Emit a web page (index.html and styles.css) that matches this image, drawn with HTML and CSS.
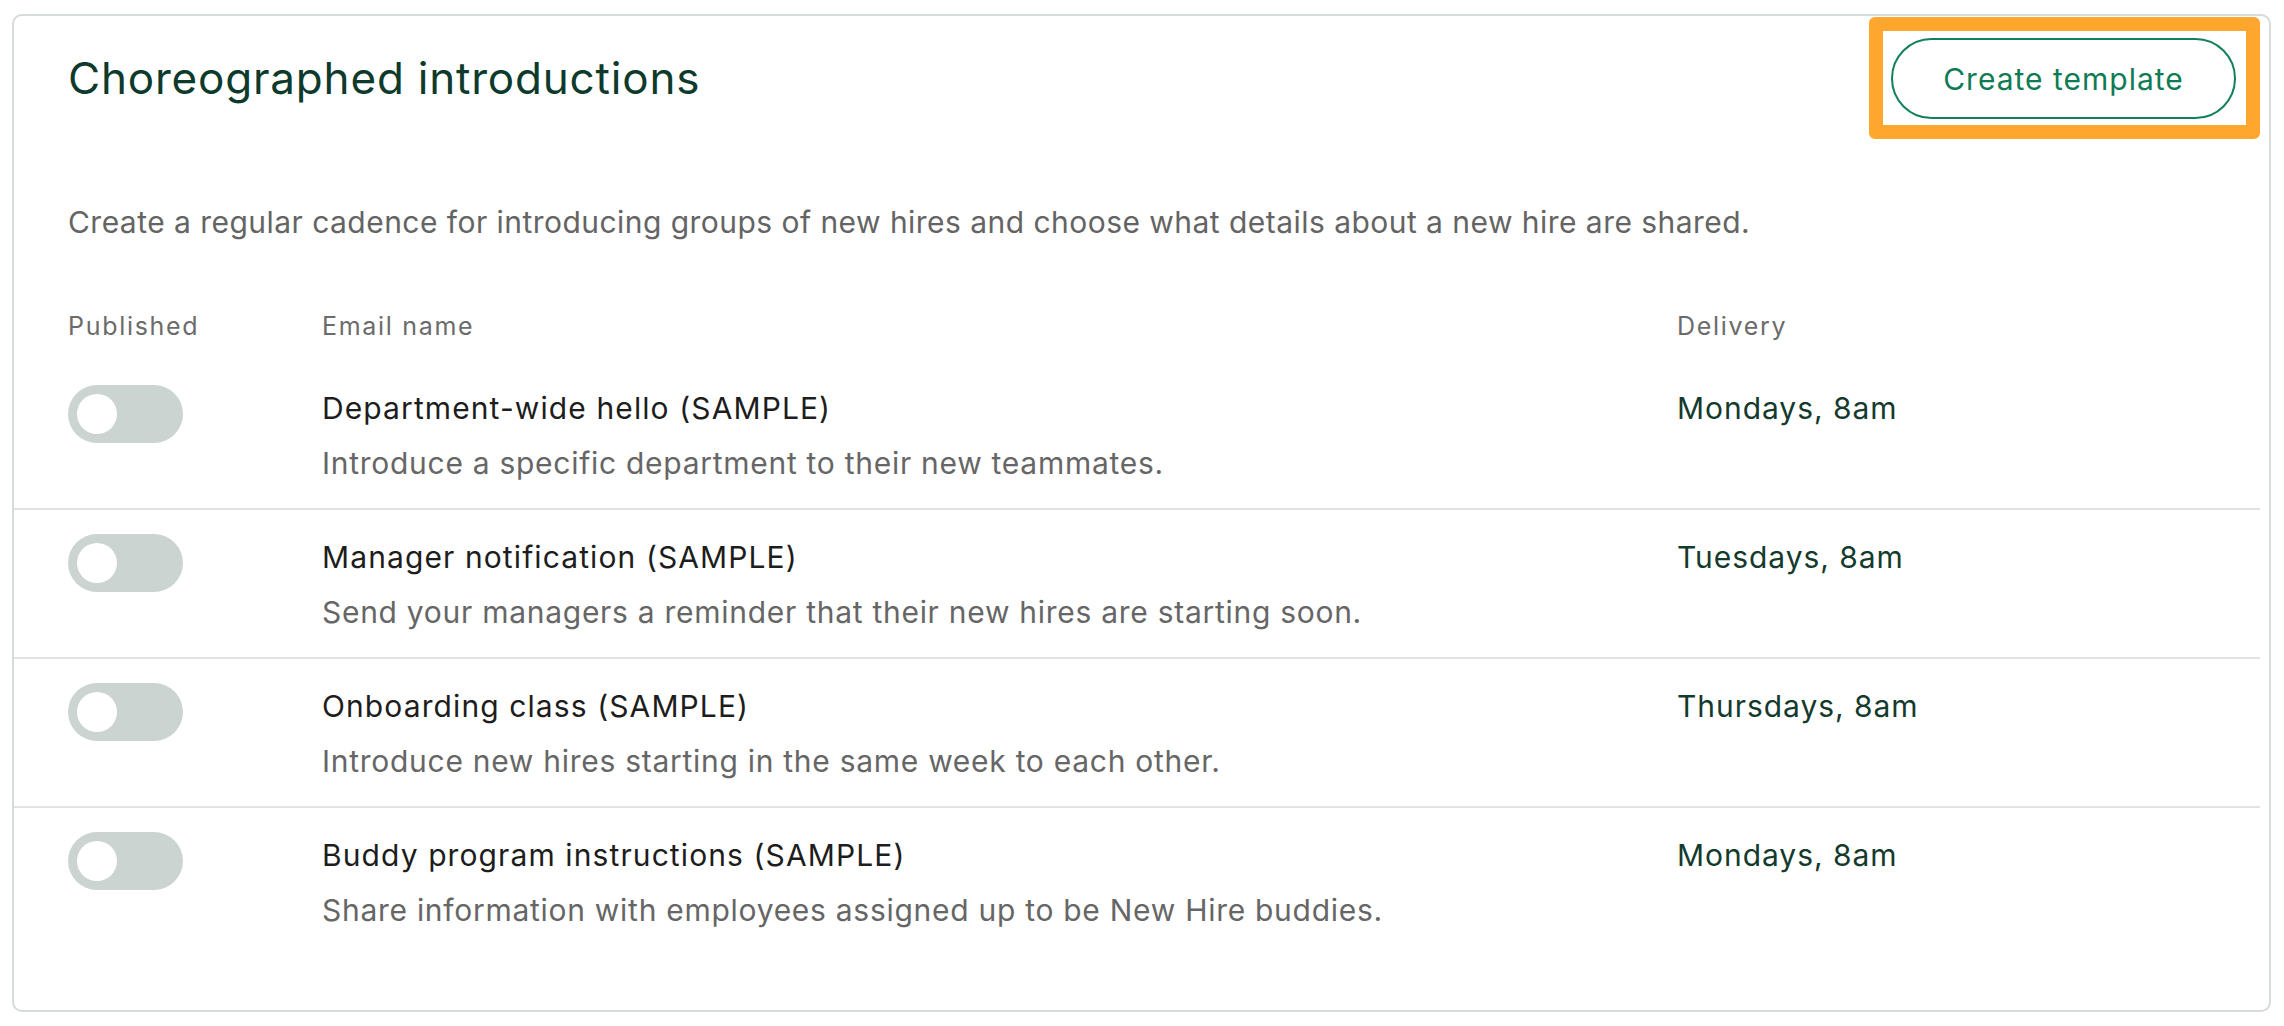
FILE: index.html
```html
<!DOCTYPE html>
<html lang="en">
<head>
<meta charset="utf-8">
<title>Choreographed introductions</title>
<link rel="stylesheet" href="styles.css">
</head>
<body>
<section class="card">
  <header class="card-header">
    <h1 class="title">Choreographed introductions</h1>
    <div class="highlight">
      <button class="btn-outline" type="button">Create template</button>
    </div>
  </header>
  <p class="description">Create a regular cadence for introducing groups of new hires and choose what details about a new hire are shared.</p>

  <div class="table">
    <div class="thead">
      <div class="th">Published</div>
      <div class="th">Email name</div>
      <div class="th">Delivery</div>
    </div>

    <div class="row">
      <div class="cell"><span class="toggle"><span class="knob"></span></span></div>
      <div class="cell text">
        <div class="name">Department-wide hello (SAMPLE)</div>
        <div class="sub">Introduce a specific department to their new teammates.</div>
      </div>
      <div class="cell text"><div class="delivery">Mondays, 8am</div></div>
    </div>

    <div class="row">
      <div class="cell"><span class="toggle"><span class="knob"></span></span></div>
      <div class="cell text">
        <div class="name">Manager notification (SAMPLE)</div>
        <div class="sub">Send your managers a reminder that their new hires are starting soon.</div>
      </div>
      <div class="cell text"><div class="delivery">Tuesdays, 8am</div></div>
    </div>

    <div class="row">
      <div class="cell"><span class="toggle"><span class="knob"></span></span></div>
      <div class="cell text">
        <div class="name">Onboarding class (SAMPLE)</div>
        <div class="sub">Introduce new hires starting in the same week to each other.</div>
      </div>
      <div class="cell text"><div class="delivery">Thursdays, 8am</div></div>
    </div>

    <div class="row">
      <div class="cell"><span class="toggle"><span class="knob"></span></span></div>
      <div class="cell text">
        <div class="name">Buddy program instructions (SAMPLE)</div>
        <div class="sub">Share information with employees assigned up to be New Hire buddies.</div>
      </div>
      <div class="cell text"><div class="delivery">Mondays, 8am</div></div>
    </div>
  </div>
</section>
</body>
</html>
```

FILE: styles.css
```css
* { box-sizing: border-box; }

html, body {
  margin: 0;
  padding: 0;
  background: #ffffff;
}

body {
  padding: 14px 13px 13px 12px;
  font-family: Inter, Roboto, "Liberation Sans", Arial, sans-serif;
  color: #1f1f1f;
}

.card {
  border: 2px solid #d6dbd9;
  border-radius: 10px;
  background: #fff;
  padding: 1px 9px 55px 0;
}

.card-header {
  display: flex;
  justify-content: space-between;
  align-items: flex-start;
  padding-left: 54px;
}

.title {
  margin: 35px 0 0 0;
  font-size: 44px;
  line-height: 52px;
  font-weight: 400;
  color: #0e3a2c;
  letter-spacing: 0.8px;
}

.highlight {
  border: 14px solid #ffa62f;
  border-radius: 6px;
  padding: 7px 10px 6px 8px;
  background: #fff;
}

.btn-outline {
  display: block;
  width: 345px;
  height: 81px;
  border: 2.5px solid #13805a;
  border-radius: 41px;
  background: #fff;
  color: #0f7b55;
  font-family: Inter, Roboto, "Liberation Sans", Arial, sans-serif;
  font-size: 30px;
  font-weight: 400;
  letter-spacing: 1px;
  padding: 0;
  cursor: pointer;
}

.description {
  margin: 63px 0 0 0;
  padding-left: 54px;
  font-size: 30px;
  line-height: 40px;
  letter-spacing: 0.46px;
  color: #646464;
}

.table {
  margin-top: 68px;
}

.thead,
.row {
  display: grid;
  grid-template-columns: 254px 1355px 1fr;
  padding-left: 54px;
}

.th {
  font-size: 25px;
  line-height: 32px;
  letter-spacing: 1.7px;
  color: #6b6b6b;
}

.thead {
  margin-bottom: 19px;
}

.row {
  padding-top: 24px;
  padding-bottom: 25px;
  align-items: start;
}

.row + .row {
  border-top: 2px solid #e0e3e2;
}

.toggle {
  display: block;
  width: 115px;
  height: 58px;
  border-radius: 29px;
  background: #cbd4d0;
  position: relative;
}

.knob {
  position: absolute;
  left: 9px;
  top: 9px;
  width: 40px;
  height: 40px;
  border-radius: 50%;
  background: #fff;
}

.text {
  padding-top: 3px;
}

.name {
  font-size: 30px;
  line-height: 40px;
  letter-spacing: 1.1px;
  color: #1d1d1d;
}

.sub {
  margin-top: 15px;
  font-size: 30px;
  line-height: 40px;
  letter-spacing: 0.72px;
  color: #666666;
}

.delivery {
  font-size: 30px;
  line-height: 40px;
  letter-spacing: 0.95px;
  color: #143a2d;
}
```
